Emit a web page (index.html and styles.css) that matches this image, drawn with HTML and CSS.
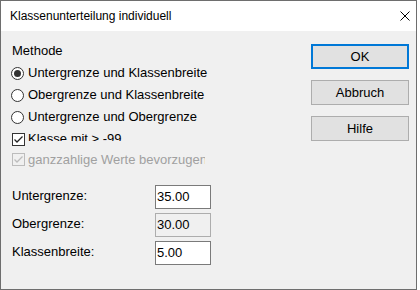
FILE: index.html
```html
<!DOCTYPE html>
<html lang="de">
<head>
<meta charset="utf-8">
<title>Klassenunterteilung individuell</title>
<link rel="stylesheet" href="styles.css">
</head>
<body>
<div class="window">
  <div class="titlebar">
    <span class="title">Klassenunterteilung individuell</span>
    <svg class="close" width="10" height="10" viewBox="0 0 10 10"><path d="M0.5 0.5 L9.5 9.5 M9.5 0.5 L0.5 9.5" stroke="#000" stroke-width="1" fill="none"/></svg>
  </div>
  <div class="content">
    <div class="left">
      <div class="row group-label">Methode</div>
      <div class="row"><span class="radio checked"><span class="dot"></span></span><span>Untergrenze und Klassenbreite</span></div>
      <div class="row"><span class="radio"></span><span>Obergrenze und Klassenbreite</span></div>
      <div class="row"><span class="radio"></span><span>Untergrenze und Obergrenze</span></div>
      <div class="row row-cb">
        <span class="check"><svg width="11" height="11" viewBox="0 0 11 11"><path d="M1.5 5.5 L4 8 L9.5 2.5" stroke="#222" stroke-width="1.3" fill="none"/></svg></span>
        <span class="clipped">Klasse mit &gt; -99</span>
      </div>
      <div class="row disabled">
        <span class="check off"><svg width="11" height="11" viewBox="0 0 11 11"><path d="M1.5 5.5 L4 8 L9.5 2.5" stroke="#bcbcbc" stroke-width="1.3" fill="none"/></svg></span>
        <span class="cut">ganzzahlige Werte bevorzugen</span>
      </div>
      <div class="fields">
        <div class="field"><span class="field-label">Untergrenze:</span><span class="input">35.00</span></div>
        <div class="field"><span class="field-label">Obergrenze:</span><span class="input readonly">30.00</span></div>
        <div class="field"><span class="field-label">Klassenbreite:</span><span class="input">5.00</span></div>
      </div>
    </div>
    <div class="buttons">
      <div class="btn default">OK</div>
      <div class="btn">Abbruch</div>
      <div class="btn">Hilfe</div>
    </div>
  </div>
</div>
</body>
</html>
```
FILE: styles.css
```css
* { box-sizing: border-box; }
html, body { margin: 0; padding: 0; background: #fff; }
body {
  font-family: "Liberation Sans", Arial, sans-serif;
  font-size: 13px;
  color: #000;
}
.window {
  width: 417px;
  height: 290px;
  border: 1px solid #6e6e6e;
  display: flex;
  flex-direction: column;
  background: #f0f0f0;
}
.titlebar {
  height: 30px;
  flex: none;
  background: #fff;
  display: flex;
  align-items: flex-start;
  padding: 8px 6px 0 9px;
  font-size: 12px;
  line-height: 14px;
}
.close { margin-left: auto; margin-top: 2px; }
.content {
  flex: 1;
  display: flex;
  padding: 8px 0 0 10px;
}
.left { width: 220px; display: flex; flex-direction: column; }
.row {
  height: 22px;
  display: flex;
  align-items: center;
  line-height: 15px;
  white-space: nowrap;
}
.group-label { padding-left: 1px; }
.radio {
  width: 13px;
  height: 13px;
  flex: none;
  border-radius: 50%;
  border: 1px solid #333;
  background: #fff;
  margin-right: 4px;
  margin-top: 2px;
  display: flex;
  align-items: center;
  justify-content: center;
}
.dot { width: 7px; height: 7px; border-radius: 50%; background: #333; }
.row-cb { height: 21px; align-items: flex-start; }
.check {
  width: 13px;
  height: 13px;
  flex: none;
  border: 1px solid #333;
  background: #fff;
  margin-left: 1px;
  margin-right: 3px;
  display: flex;
  align-items: center;
  justify-content: center;
}
.row-cb .check { margin-top: 6px; }
.clipped {
  display: block;
  height: 10px;
  margin-top: 4px;
  overflow: hidden;
  line-height: 15px;
}
.disabled { color: #a0a0a0; }
.check.off { border-color: #bcbcbc; background: #f0f0f0; }
.cut { display: block; width: 177px; overflow: hidden; }
.fields {
  margin-top: 15px;
  display: flex;
  flex-direction: column;
  gap: 4px;
}
.field { height: 24px; display: flex; }
.field-label { width: 144px; padding-left: 1px; padding-top: 3px; line-height: 15px; }
.input {
  width: 56px;
  height: 24px;
  border: 1px solid #7a7a7a;
  background: #fff;
  padding-left: 1px;
  line-height: 22px;
}
.input.readonly { background: #f0f0f0; border-color: #adadad; }
.buttons {
  margin-left: auto;
  margin-right: 7px;
  padding-top: 5px;
  display: flex;
  flex-direction: column;
  gap: 11px;
}
.btn {
  width: 98px;
  height: 25px;
  background: #e1e1e1;
  border: 1px solid #adadad;
  display: flex;
  align-items: center;
  justify-content: center;
}
.btn.default { border: 2px solid #0078d7; }
```
